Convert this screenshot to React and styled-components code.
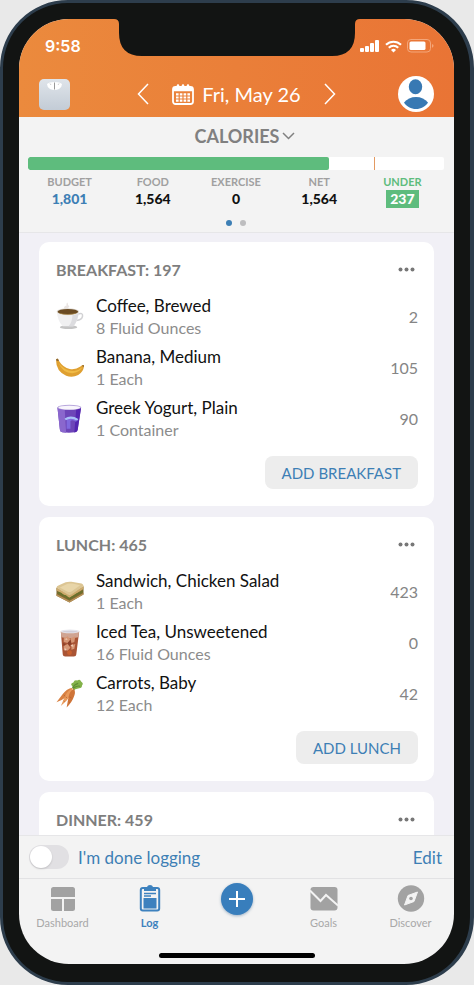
import { useState } from "react";
import styled, { createGlobalStyle } from "styled-components";

const GlobalStyle = createGlobalStyle`
  * {
    box-sizing: border-box;
  }
  body {
    margin: 0;
    background: #e9e9e9;
    font-family: Lato, "Liberation Sans", sans-serif;
    color: #111;
  }
  button {
    border: 0;
    padding: 0;
    background: none;
    font: inherit;
    color: inherit;
    cursor: pointer;
  }
  svg {
    display: block;
  }
`;

const Phone = styled.div`
  height: 100vh;
  padding: 16px 16px 18px;
  border: 3px solid #2d3d4c;
  border-right-width: 4px;
  border-radius: 68px;
  background: #121413;
`;

const Screen = styled.div`
  position: relative;
  display: flex;
  flex-direction: column;
  height: 100%;
  overflow: hidden;
  border-radius: 50px;
  background: #f3f3f3;
`;

const Notch = styled.svg`
  position: absolute;
  top: 0;
  left: 50%;
  transform: translateX(-50%);
`;

const Header = styled.header`
  flex: none;
  height: 98px;
  padding: 0 20px;
  color: #fff;
  background: linear-gradient(90deg, #eb8a3d, #e97435);
`;

const StatusBar = styled.div`
  display: flex;
  align-items: center;
  justify-content: space-between;
  height: 54px;
  padding: 0 0 0 6px;
  font-family: Inter, sans-serif;
  font-size: 16px;
  font-weight: 600;
`;

const StatusIcons = styled.div`
  display: flex;
  align-items: center;
  gap: 5px;
`;

const DateBar = styled.div`
  display: grid;
  grid-template-columns: 1fr auto 1fr;
  align-items: center;
  height: 42px;
`;

const DateNav = styled.div`
  display: flex;
  align-items: center;
  gap: 23px;
`;

const DateButton = styled.button`
  display: flex;
  align-items: center;
  gap: 8px;
  font-size: 20px;
  line-height: 28px;
`;

const ProfileButton = styled.button`
  justify-self: end;
`;

const Summary = styled.section`
  flex: none;
  height: 116px;
  padding: 8px 10px 0 9px;
  border-bottom: 1px solid #e6e6e8;
`;

const SummaryTitle = styled.button`
  display: flex;
  align-items: center;
  gap: 3px;
  height: 22px;
  margin: 0 auto 10px;
  padding-left: 18px;
  font-size: 18px;
  font-weight: 700;
  color: #808080;
`;

const Bar = styled.div`
  position: relative;
  height: 13px;
  border-radius: 2px;
  overflow: hidden;
  background: #fff;
`;

const BarFill = styled.div`
  height: 100%;
  border-radius: 2px;
  background: #5ebc7d;
`;

const BarMark = styled.div`
  position: absolute;
  top: 0;
  width: 1px;
  height: 100%;
  background: #e39a62;
`;

const Stats = styled.dl`
  display: grid;
  grid-template-columns: repeat(5, 1fr);
  margin: 4px 0 0;
  text-align: center;
`;

const StatLabel = styled.dt`
  font-size: 11px;
  font-weight: 700;
  line-height: 16px;
  color: ${({ $under }) => ($under ? "#5ebc7d" : "#a0a0a0")};
`;

const StatValue = styled.dd`
  width: fit-content;
  margin: 0 auto;
  padding: 0 4px;
  font-size: 14px;
  font-weight: 900;
  line-height: 18px;
  color: ${({ $color }) => $color || "#111"};
  background: ${({ $bg }) => $bg || "none"};
`;

const Dots = styled.div`
  display: flex;
  justify-content: center;
  gap: 8px;
  padding-top: 12px;
`;

const Dot = styled.span`
  width: 6px;
  height: 6px;
  border-radius: 50%;
  background: ${({ $on }) => ($on ? "#3d7fb5" : "#bdbdbf")};
`;

const Meals = styled.main`
  flex: 1;
  min-height: 0;
  display: flex;
  flex-direction: column;
  gap: 11px;
  padding: 9px 20px 0;
  overflow-y: auto;
  scrollbar-width: none;
  background: #f1f0f6;
`;

const Card = styled.section`
  flex: none;
  padding: 0 16px 17px 17px;
  border-radius: 10px;
  background: #fff;
`;

const CardHead = styled.div`
  display: flex;
  align-items: center;
  justify-content: space-between;
  height: 49px;
  padding-top: 6px;
`;

const MealTitle = styled.h2`
  margin: 0;
  font-size: 16px;
  font-weight: 700;
  color: #7e7e7e;
`;

const MoreButton = styled.button`
  padding-right: 3px;
`;

const FoodList = styled.ul`
  margin: 0;
  padding: 0;
  list-style: none;
`;

const FoodRow = styled.li`
  display: flex;
  align-items: center;
  gap: 12px;
  height: 51px;
`;

const FoodText = styled.div`
  flex: 1;
`;

const FoodName = styled.div`
  font-size: 17px;
  line-height: 23px;
`;

const FoodAmount = styled.div`
  font-size: 16px;
  line-height: 22px;
  color: #8c8c8c;
`;

const FoodCalories = styled.div`
  font-size: 16px;
  color: #858585;
`;

const AddButton = styled.button`
  display: block;
  height: 33px;
  margin: 12px 0 0 auto;
  padding: 0 17px;
  border-radius: 8px;
  font-size: 15px;
  color: #3d7fb5;
  background: #ededed;
`;

const DoneBar = styled.div`
  flex: none;
  display: flex;
  align-items: center;
  justify-content: space-between;
  height: 43px;
  padding: 0 12px 0 10px;
  border-top: 1px solid #e6e6e8;
  font-size: 17px;
  color: #3d7fb5;
`;

const DoneLabel = styled.label`
  display: flex;
  align-items: center;
  gap: 9px;
`;

const Toggle = styled.input`
  appearance: none;
  display: flex;
  align-items: center;
  justify-content: ${({ checked }) => (checked ? "flex-end" : "flex-start")};
  width: 40px;
  height: 24px;
  margin: 0;
  padding: 0 1px;
  border-radius: 12px;
  background: ${({ checked }) => (checked ? "#5ebc7d" : "#e1e0e3")};

  &::before {
    content: "";
    width: 22px;
    height: 22px;
    border-radius: 50%;
    background: #fff;
    box-shadow: 0 1px 2px rgba(0, 0, 0, 0.15);
  }
`;

const TabBar = styled.nav`
  flex: none;
  display: grid;
  grid-template-columns: repeat(5, 1fr);
  height: 75px;
  border-top: 1px solid #e2e2e4;
`;

const Tab = styled.a`
  display: flex;
  flex-direction: column;
  align-items: center;
  height: 54px;
  padding-top: 5px;
  font-size: 11px;
  line-height: 18px;
  font-weight: ${({ $active }) => ($active ? 700 : 400)};
  text-decoration: none;
  color: ${({ $active }) => ($active ? "#3d81be" : "#a8a8a8")};

  svg {
    margin-bottom: 2px;
  }
`;

const PlusButton = styled.button`
  justify-self: center;
  display: flex;
  align-items: center;
  justify-content: center;
  width: 32px;
  height: 32px;
  margin-top: 4px;
  border-radius: 50%;
  background: #387ebc;
  box-shadow: 0 1px 3px rgba(30, 80, 130, 0.4);
`;

const HomeIndicator = styled.div`
  flex: none;
  width: 156px;
  height: 5px;
  margin: 0 auto 6px;
  border-radius: 3px;
  background: #000;
`;

/* ---------- icons ---------- */

const Chevron = ({ d, width, height, stroke }) => (
  <svg width={width} height={height} fill="none" stroke={stroke} strokeWidth="1.5">
    <path d={d} />
  </svg>
);

const Signal = () => (
  <svg width="20" height="13" fill="#fff">
    <rect x="0" y="8" width="4" height="4" rx="1" />
    <rect x="5" y="6" width="4" height="6" rx="1" />
    <rect x="10" y="3" width="4" height="9" rx="1" />
    <rect x="15" y="0" width="4" height="12" rx="1" />
  </svg>
);

const Wifi = () => (
  <svg width="17" height="13" viewBox="0 0 17 13" fill="none" stroke="#fff" strokeWidth="2.2">
    <path d="M1 4.8a10.8 10.8 0 0 1 15 0" />
    <path d="M3.8 7.7a6.7 6.7 0 0 1 9.4 0" />
    <path d="M8.5 12.4 6 9.9a3.6 3.6 0 0 1 5 0Z" fill="#fff" stroke="none" />
  </svg>
);

const Battery = () => (
  <svg width="27" height="14" viewBox="0 0 27 14">
    <rect x=".5" y=".5" width="23" height="12.5" rx="3.5" fill="none" stroke="#f4a67a" />
    <rect x="2.5" y="2.5" width="16" height="8.5" rx="1.5" fill="#fff" />
    <path d="M25 5q1.5.4 1.5 1.8T25 8.7Z" fill="#f4a67a" />
  </svg>
);

const Scale = () => (
  <svg width="31" height="31" viewBox="0 0 31 31">
    <defs>
      <linearGradient id="scale" x2="0" y2="1">
        <stop offset="0" stopColor="#dfe4ea" />
        <stop offset="1" stopColor="#c3ccd6" />
      </linearGradient>
    </defs>
    <rect width="31" height="31" rx="5" fill="url(#scale)" />
    <path d="M8 5Q10 3 15.500 3T23 5Q23 8 20 10q-4.500 1.800-9 0Q8 8 8 5Z" fill="#fff" />
    <path d="M15.500 3.500v7" stroke="#999" />
    <path d="M11 4.500 12 6M20 4.500 19 6" stroke="#bbb" strokeWidth=".7" />
  </svg>
);

const Calendar = () => (
  <svg width="22" height="21" viewBox="0 0 22 21" fill="none" stroke="#fff">
    <rect x="1" y="3" width="20" height="17" rx="2.500" strokeWidth="1.800" />
    <path d="M1 5.500h20" strokeWidth="3.500" />
    <path d="M6 1.500v3M11 1.500v3M16 1.500v3" strokeWidth="2.600" strokeLinecap="round" />
    <path d="M4 10.300h14M4 13.500h14M4 16.700h14" strokeWidth="2.200" strokeDasharray="2.600 1.200" />
  </svg>
);

const Avatar = () => (
  <svg width="36" height="36" viewBox="0 0 36 36">
    <circle cx="18" cy="18" r="18" fill="#fff" />
    <ellipse cx="17.500" cy="10.800" rx="6.700" ry="7.500" fill="#3879b3" />
    <path d="M6 26.500C9 23 13 21 18 21s9 2 12 5.500C27.500 30.500 23 33 18 33S8.500 30.500 6 26.500Z" fill="#3879b3" />
  </svg>
);

const More = () => (
  <svg width="17" height="5" fill="#777">
    <circle cx="2.500" cy="2.500" r="2" />
    <circle cx="8.500" cy="2.500" r="2" />
    <circle cx="14.500" cy="2.500" r="2" />
  </svg>
);

const Coffee = () => (
  <>
    <path d="M9 7Q7 4 11 3q-1-2 1-3 0 3 2 4-2 1-1 4Z" fill="#e9e4e2" />
    <ellipse cx="13" cy="25.500" rx="9" ry="2" fill="#c4c4c4" />
    <path d="M22.500 12q5.500-2 5 2-.5 4-6.500 4.500" fill="none" stroke="#d2d2d4" strokeWidth="1.600" />
    <path d="M1 9.500Q1.500 19 7 24.500h11Q23 19 23.700 9.500Z" fill="#f0f0f1" />
    <path d="M17 13q4-.5 6.500-2Q22 20 18 24.500h-5q4-4 4-11.500Z" fill="#dcdcdf" />
    <ellipse cx="12.300" cy="9.500" rx="11.700" ry="3.600" fill="#e2ddd6" />
    <ellipse cx="12.300" cy="9.600" rx="10.700" ry="2.800" fill="#6a4b22" />
    <path d="M2.500 10.500q9.500 3 19.600 0-3 2-9.800 2t-9.800-2Z" fill="#a98643" />
  </>
);

const Banana = () => (
  <>
    <path d="M0 6.500Q.5 5 2 5.500L3.300 8q4 6.500 11 8 6 1 11-2.500l2-1.500q1.700-.5 1.700 1-.5 6-6 9.300-6 3-12.500.7Q0 18.500 0 6.500Z" fill="#dfa031" />
    <path d="M2.500 9.500q7 9.500 16.500 8.500 5-.7 8.500-4-2.500 5-9.500 6.300Q7.500 21 2.500 9.500Z" fill="#f0bb46" />
    <path d="M0 6.500Q.5 5 2 5.500L3 7.500Q1 8.500 0 6.500ZM27.300 12q1.700-.5 1.700 1l-1 1.500Z" fill="#8a6733" />
  </>
);

const Yogurt = () => (
  <>
    <path d="M1.500 3 4 26q.2 2.500 2.500 2.800 7 1 13.500 0 2.200-.3 2.500-2.800L26 3Z" fill="#6d45b8" />
    <path d="M1.500 3 4 26q.2 2.500 2.500 2.800l4 .4L9 4Z" fill="#8a67cd" />
    <path d="M21 4 19 28.900q3-.1 3.500-2.900L26 3Z" fill="#5425b0" />
    <ellipse cx="13.800" cy="3" rx="12.300" ry="2.700" fill="#b9a8dc" />
    <ellipse cx="13.800" cy="3.200" rx="11.300" ry="1.900" fill="#f8f5fc" />
    <path d="M11 25V15q5-2 10 0v3q-4-3-6-1v8Z" fill="#8069de" />
    <path d="M9.500 15.500q6-4 13 .5" fill="none" stroke="#a9c0f8" strokeWidth="2.200" />
  </>
);

const Sandwich = () => (
  <>
    <path d="M.5 10.500 14 18 28.500 9v8.500L14 26 .5 19Z" fill="#7f6a30" />
    <path d="M.5 10.500 14 18 28.500 9v3L14 21 .5 13.500Z" fill="#cdaa6c" />
    <path d="m.5 17 13.500 7 14.500-8v1.500L14 26 .5 19Z" fill="#b9925a" />
    <path d="m2 15.500 3 1 2 2 3 .5 2 2 2 1 3-2 2-1 3-2 3-1 2.500-2" fill="none" stroke="#66732c" strokeWidth="1.500" />
    <path d="M.5 10.500Q.5 9 3 8l7-3q3-1 6-.5l9 1.500q3.500.5 3.500 3L16 17.500q-2 1-4 0Z" fill="#dcc593" />
    <path d="M4 10.300 12 6.500q2-.7 5-.2l8 1.700-9 6.500q-2 1-4 .2Z" fill="#e8d5a8" />
  </>
);

const IcedTea = () => (
  <>
    <path d="M5 3 7 27q.2 2 2.500 2h9q2.300 0 2.500-2l3-24Z" fill="#a95435" />
    <path d="M5 3 5.500 9q8 2 17.700 0l.8-6Z" fill="#d0a492" />
    <path d="m8 10 4-2 3 3-3 4-4-1ZM15 10l5-2-1 6-3 1ZM8 18l4-2 3 4-3 3-4-1ZM16 17l4-1-1 5-3 1Z" fill="#d69776" />
    <path d="m9 11 2-1 1 2ZM15 18l2-2 1 3ZM9 20l2 2-2 1Z" fill="#f0cdb8" />
    <path d="m12 15 3-3 1 4-2 2ZM7 15l3 1-2 2Z" fill="#8a402a" />
    <circle cx="14" cy="25" r="2.500" fill="#c8602f" />
    <ellipse cx="14.500" cy="3" rx="9.600" ry="2" fill="#e5e5ec" />
    <ellipse cx="14.500" cy="3.200" rx="7.800" ry="1" fill="#d2ced8" />
  </>
);

const Carrots = () => (
  <>
    <path d="M17 7q-3-3 1-4 1-3 4-2 3-2 4 1 3 2 1 4 0 3-3 3l-4 1-2 2Z" fill="#83b24a" />
    <path d="M17 9q2-4 6-5M18 9q4-3 7-2" fill="none" stroke="#5f8f35" strokeWidth="1.100" />
    <path d="M17 8.500Q11 9.500 7 15L.5 23.500Q7 21 12 17Z" fill="#d98243" />
    <path d="M17.500 9Q12 11 9.500 17L5 27.500Q11.500 22 15.500 16Z" fill="#e99a5b" />
    <path d="M18.500 9.500Q14 12 13 18l-2 11Q17 23 19 16.500q1.500-4-.5-7Z" fill="#cf7438" />
    <path d="m8 16 1.500 1M10 18l1.500 1M8 22l1 1M14 18l2 1M13 23l1.500 1" stroke="#b0602e" strokeWidth=".7" />
  </>
);

const FoodIcon = ({ art: Art }) => (
  <svg width="28" height="30" viewBox="0 0 29 30" aria-hidden="true">
    <Art />
  </svg>
);

const DashboardIcon = () => (
  <svg width="26" height="28" viewBox="0 0 26 28" fill="#a2a2a2">
    <path d="M3.500 3h19Q25 3 25 5.500V13H1V5.500Q1 3 3.500 3ZM1 15h11v12H3.500Q1 27 1 24.500ZM14 15h11v9.500q0 2.500-2.500 2.500H14Z" />
  </svg>
);

const LogIcon = () => (
  <svg width="22" height="28" viewBox="0 0 22 28">
    <rect x="1.800" y="4" width="18.400" height="22.500" rx="2" fill="#f3f3f3" stroke="#3d81be" strokeWidth="2" />
    <path d="M5 7V4.500Q5 3 8 3q.5-2 3-2t3 2q3 0 3 1.500V7Z" fill="#3d81be" />
    <path d="M5 9.500h12M5 12h7" stroke="#3d81be" strokeWidth="1.400" />
    <rect x="4.500" y="14" width="13" height="10.500" fill="#3d81be" />
  </svg>
);

const GoalsIcon = () => (
  <svg width="28" height="28" viewBox="0 0 28 28">
    <rect x="0.500" y="3" width="27" height="23.500" rx="3" fill="#a2a2a2" />
    <path d="M0 6.500 10.500 17l5.500-6 12 10.500" fill="none" stroke="#f3f3f3" strokeWidth="2" />
  </svg>
);

const DiscoverIcon = () => (
  <svg width="28" height="28" viewBox="0 0 28 28">
    <circle cx="14" cy="14.500" r="13.200" fill="#a2a2a2" />
    <path d="M20.500 8 17 17.500 7.500 21 11 11.500Z" fill="#f3f3f3" stroke="#f3f3f3" strokeLinejoin="round" />
    <circle cx="14" cy="14.500" r="1.800" fill="#a2a2a2" />
  </svg>
);

/* ---------- data ---------- */

const stats = [
  { label: "BUDGET", value: "1,801", color: "#3d7fb5" },
  { label: "FOOD", value: "1,564" },
  { label: "EXERCISE", value: "0" },
  { label: "NET", value: "1,564" },
  { label: "UNDER", value: "237", color: "#fff", bg: "#5ebc7d", under: true },
];

const meals = [
  {
    name: "Breakfast",
    total: 197,
    foods: [
      { name: "Coffee, Brewed", amount: "8 Fluid Ounces", calories: 2, art: Coffee },
      { name: "Banana, Medium", amount: "1 Each", calories: 105, art: Banana },
      { name: "Greek Yogurt, Plain", amount: "1 Container", calories: 90, art: Yogurt },
    ],
  },
  {
    name: "Lunch",
    total: 465,
    foods: [
      { name: "Sandwich, Chicken Salad", amount: "1 Each", calories: 423, art: Sandwich },
      { name: "Iced Tea, Unsweetened", amount: "16 Fluid Ounces", calories: 0, art: IcedTea },
      { name: "Carrots, Baby", amount: "12 Each", calories: 42, art: Carrots },
    ],
  },
  { name: "Dinner", total: 459, foods: [] },
];

const MealCard = ({ name, total, foods }) => {
  const title = name.toUpperCase();
  return (
    <Card>
      <CardHead>
        <MealTitle>
          {title}: {total}
        </MealTitle>
        <MoreButton aria-label={`${name} options`}>
          <More />
        </MoreButton>
      </CardHead>
      {foods.length > 0 && (
        <>
          <FoodList>
            {foods.map((food) => (
              <FoodRow key={food.name}>
                <FoodIcon art={food.art} />
                <FoodText>
                  <FoodName>{food.name}</FoodName>
                  <FoodAmount>{food.amount}</FoodAmount>
                </FoodText>
                <FoodCalories>{food.calories}</FoodCalories>
              </FoodRow>
            ))}
          </FoodList>
          <AddButton>ADD {title}</AddButton>
        </>
      )}
    </Card>
  );
};

const App = () => {
  const [done, setDone] = useState(false);

  return (
    <>
      <GlobalStyle />
      <Phone>
        <Screen>
          <Header>
            <StatusBar>
              <span>9:58</span>
              <StatusIcons>
                <Signal />
                <Wifi />
                <Battery />
              </StatusIcons>
            </StatusBar>
            <DateBar>
              <button aria-label="Weight">
                <Scale />
              </button>
              <DateNav>
                <button aria-label="Previous day">
                  <Chevron width={12} height={22} stroke="#fff" d="M11 1 1.500 11 11 21" />
                </button>
                <DateButton>
                  <Calendar />
                  Fri, May 26
                </DateButton>
                <button aria-label="Next day">
                  <Chevron width={12} height={22} stroke="#fff" d="M1 1 10.500 11 1 21" />
                </button>
              </DateNav>
              <ProfileButton aria-label="Profile">
                <Avatar />
              </ProfileButton>
            </DateBar>
          </Header>

          <Summary>
            <SummaryTitle>
              CALORIES
              <Chevron width={13} height={8} stroke="#808080" d="M1 1 6.500 6.500 12 1" />
            </SummaryTitle>
            <Bar>
              <BarFill style={{ width: `${(1564 / 2160) * 100}%` }} />
              <BarMark style={{ left: `${(1801 / 2165) * 100}%` }} />
            </Bar>
            <Stats>
              {stats.map((s) => (
                <div key={s.label}>
                  <StatLabel $under={s.under}>{s.label}</StatLabel>
                  <StatValue $color={s.color} $bg={s.bg}>
                    {s.value}
                  </StatValue>
                </div>
              ))}
            </Stats>
            <Dots>
              <Dot $on />
              <Dot />
            </Dots>
          </Summary>

          <Meals>
            {meals.map((meal) => (
              <MealCard key={meal.name} {...meal} />
            ))}
          </Meals>

          <DoneBar>
            <DoneLabel htmlFor="done">
              <Toggle
                id="done"
                type="checkbox"
                checked={done}
                onChange={(e) => setDone(e.target.checked)}
              />
              I'm done logging
            </DoneLabel>
            <button>Edit</button>
          </DoneBar>

          <TabBar>
            <Tab href="#dashboard">
              <DashboardIcon />
              Dashboard
            </Tab>
            <Tab href="#log" $active>
              <LogIcon />
              Log
            </Tab>
            <PlusButton aria-label="Add">
              <svg width="16" height="16" stroke="#fff" strokeWidth="2">
                <path d="M8 0v16M0 8h16" />
              </svg>
            </PlusButton>
            <Tab href="#goals">
              <GoalsIcon />
              Goals
            </Tab>
            <Tab href="#discover">
              <DiscoverIcon />
              Discover
            </Tab>
          </TabBar>
          <HomeIndicator />

          <Notch width="246" height="37" viewBox="0 0 246 37" fill="#121413">
            <path d="M0 0q5 0 5 5v9q0 23 23 23h190q23 0 23-23V5q0-5 5-5Z" />
          </Notch>
        </Screen>
      </Phone>
    </>
  );
};

export default App;
